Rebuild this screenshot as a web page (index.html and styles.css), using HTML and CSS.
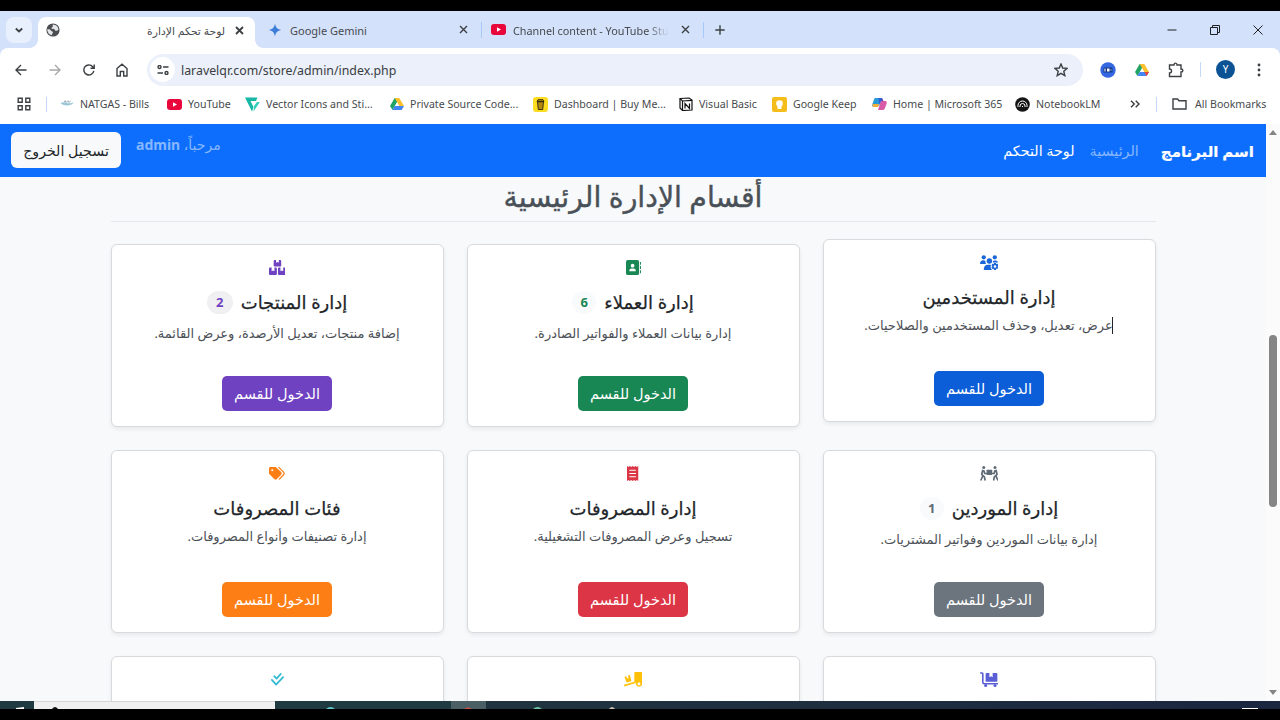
FILE: index.html
```
<!DOCTYPE html>
<html lang="ar" dir="rtl">
<head>
  <meta charset="UTF-8">
  <meta name="viewport" content="width=device-width, initial-scale=1.0">
  <title>لوحة تحكم الإدارة</title>
  <link rel="stylesheet" href="styles.css">
</head>
<body>
  <div class="screen">
    <!-- Browser window -->
    <div class="browser" dir="ltr">
      <div class="tab-strip">
        <div class="tab-search"><svg width="10" height="10" viewBox="0 0 10 10"><path d="M1.8 3.5 5 6.5l3.2-3" class="line bold"/></svg></div>
        <div class="tab active">
          <svg width="14" height="14" viewBox="0 0 14 14"><circle cx="7" cy="7" r="6.6" fill="#4a4d51"/><path d="M1.2 6.3c2-.2 3.2.2 3.7 1.2.5.9 1.8.8 2 1.8.2.9-1 1.3-1.2 3-2.6-.6-4.5-3-4.5-6zM6.8 1.6c-.6 1 .2 1.3 0 2-.2.8-1.6.8-1.2 1.8.5 1 1.8.3 2.7.8.9.5.5 1.5 1.6 1.6 1 .1 1.4-.8 2.5-.8.2-2.7-2-5.3-5.6-5.4z" fill="#e3e5e8"/></svg>
          <span class="tab-title" dir="rtl">لوحة تحكم الإدارة</span>
          <svg width="9" height="9" viewBox="0 0 9 9"><path d="M1 1l7 7M8 1 1 8" class="line bold"/></svg>
        </div>
        <div class="tab gemini">
          <svg width="14" height="14" viewBox="0 0 14 14"><path d="M7 .5c.6 4 2.5 5.900 6.500 6.500-4 .6-5.900 2.500-6.500 6.500C6.400 9.500 4.500 7.600.5 7 4.500 6.400 6.400 4.500 7 .5z" fill="#3b7dd8"/></svg>
          <span class="tab-title">Google Gemini</span>
          <svg width="9" height="9" viewBox="0 0 9 9"><path d="M1 1l7 7M8 1 1 8" class="line"/></svg>
        </div>
        <div class="tab studio">
          <svg width="15" height="11" viewBox="0 0 15 11"><rect width="15" height="11" rx="3" fill="#e8063a"/><path d="M6 3.200v4.600l4-2.300z" fill="#fff"/></svg>
          <span class="tab-title fade">Channel content - YouTube Stu</span>
          <svg width="9" height="9" viewBox="0 0 9 9"><path d="M1 1l7 7M8 1 1 8" class="line"/></svg>
        </div>
        <div class="new-tab"><svg width="10" height="10" viewBox="0 0 10 10"><path d="M5 .3v9.400M.3 5h9.400" class="line"/></svg></div>
        <div class="window-buttons">
          <svg width="10" height="10" viewBox="0 0 10 10"><path d="M.5 5h9" class="line thin"/></svg>
          <svg width="10" height="10" viewBox="0 0 10 10"><path d="M.5 2.500h7v7h-7zM2.500 2.500v-2h7v7h-2" class="line thin"/></svg>
          <svg width="10" height="10" viewBox="0 0 10 10"><path d="M.5.5l9 9M9.500.5l-9 9" class="line thin"/></svg>
        </div>
      </div>

      <div class="toolbar">
        <svg width="12" height="12" viewBox="0 0 12 12"><path d="M11.500 6H1.200M6 1 1 6l5 5" class="line"/></svg>
        <svg class="disabled" width="12" height="12" viewBox="0 0 12 12"><path d="M.5 6h10.300M6 1l5 5-5 5" class="line"/></svg>
        <svg width="12" height="12" viewBox="0 0 12 12"><path d="M10.800 6.800A5 5 0 1 1 9.700 2.700L11 4M11.200.5v3.700H7.500" class="line"/></svg>
        <svg width="12" height="14" viewBox="0 0 12 14"><path d="M1 5.500 6 1.200l5 4.300V13H7.700V8.500H4.300V13H1z" class="line"/></svg>
        <div class="address-bar">
          <span class="site-info"><svg width="12" height="10" viewBox="0 0 12 10"><circle cx="2.500" cy="2" r="1.500" class="line"/><circle cx="9.500" cy="8" r="1.500" class="line"/><path d="M6 2h5.500M.5 8H6" class="line"/></svg></span>
          <span class="url">laravelqr.com/store/admin/index.php</span>
          <svg width="14" height="14" viewBox="0 0 14 14"><path d="M7 1l1.700 4 4.400.4-3.300 2.900 1 4.300L7 10.300l-3.800 2.300 1-4.300L.9 5.400 5.300 5z" class="line"/></svg>
        </div>
        <div class="extensions">
          <svg width="16" height="16" viewBox="0 0 16 16"><circle cx="8" cy="8" r="7.700" fill="#3568e0"/><rect x="3.500" y="5.500" width="9" height="5" rx="1" fill="#123a8c"/><path d="M4.500 6.500h1v3h-1zM7 6.500h2.500v3H7zM10.500 7.500h1v1h-1z" fill="#fff"/></svg>
          <svg width="14" height="12" viewBox="0 0 14 12"><path d="M4.700 0h4.600L7 4 2.500 12 0 8z" fill="#1fa463"/><path d="M4.700 0h4.600L14 8H9.400z" fill="#fbc02d"/><path d="M4.700 8H14l-2.400 4H2.400z" fill="#4285f4"/><path d="M9.400 8H14l-2.400 4z" fill="#ea4335"/></svg>
          <svg width="16" height="16" viewBox="0 0 16 16"><path d="M1.500 3H6c0-2.500 3-2.500 3 0h4v4c2.500 0 2.500 3 0 3v4.500H1.500V11c2.700 0 2.700-4 0-4z" class="line"/></svg>
        </div>
        <span class="separator"></span>
        <span class="avatar">Y</span>
        <svg class="menu" width="4" height="14" viewBox="0 0 4 14"><g fill="#3c4043"><circle cx="2" cy="2" r="1.400"/><circle cx="2" cy="7" r="1.400"/><circle cx="2" cy="12" r="1.400"/></g></svg>
      </div>

      <div class="bookmarks">
        <svg width="14" height="14" viewBox="0 0 14 14"><path d="M1.200 1.200h4v4h-4zM8.800 1.200h4v4h-4zM1.200 8.800h4v4h-4zM8.800 8.800h4v4h-4z" class="line"/></svg>
        <span class="separator"></span>
        <div class="bookmark"><svg width="14" height="14" viewBox="0 0 15 14"><path d="M.5 6c3-1 5-.5 7 0s5 0 7-1c-1 4-11 5-14 1z" fill="#9cc7d9"/><path d="M4 5.500l1.500-2 1 2 2-2 1 2 2-2" fill="none" stroke="#76929e" stroke-width=".8"/></svg><span>NATGAS - Bills</span></div>
        <div class="bookmark"><svg width="15" height="11" viewBox="0 0 15 11"><rect width="15" height="11" rx="3" fill="#e8063a"/><path d="M6 3.200v4.600l4-2.300z" fill="#fff"/></svg><span>YouTube</span></div>
        <div class="bookmark"><svg width="15" height="15" viewBox="0 0 15 15"><path d="M0 .5h12.500L11 4H5.500l3 6L7 14.500z" fill="#16b8a4"/><path d="M12 5h2.800L8.500 14.500 9 9z" fill="#2fcfb9"/></svg><span>Vector Icons and Sti...</span></div>
        <div class="bookmark"><svg width="14" height="12" viewBox="0 0 14 12"><path d="M4.700 0h4.600L7 4 2.500 12 0 8z" fill="#1fa463"/><path d="M4.700 0h4.600L14 8H9.400z" fill="#fbc02d"/><path d="M4.700 8H14l-2.400 4H2.400z" fill="#4285f4"/></svg><span>Private Source Code...</span></div>
        <div class="bookmark"><svg width="15" height="15" viewBox="0 0 15 15"><rect width="15" height="15" rx="3" fill="#fbdc20"/><path d="M4.500 4.800h6L9.700 12.500H5.300zM4 4.500l1-1.800h5l1 1.800z" fill="#b28a10" stroke="#2b260c" stroke-width=".9"/></svg><span>Dashboard | Buy Me...</span></div>
        <div class="bookmark"><svg width="14" height="14" viewBox="0 0 14 14"><path d="M1 1.500 10 1l3 2v10l-9.500.5L1 11z" fill="#fff" stroke="#111" stroke-width="1.200"/><path d="M1 1.500 3.500 4l9.500-.6M3.500 4v9.500M6 11.500v-5l4.500 5v-5" fill="none" stroke="#111" stroke-width="1.200"/></svg><span>Visual Basic</span></div>
        <div class="bookmark"><svg width="15" height="15" viewBox="0 0 15 15"><rect width="15" height="15" rx="2" fill="#f5bd1c"/><circle cx="7.500" cy="6.500" r="3.300" fill="#fff"/><path d="M5.500 9h4v3h-4z" fill="#fff"/></svg><span>Google Keep</span></div>
        <div class="bookmark"><svg width="15" height="14" viewBox="0 0 15 14"><path d="M4 1h5.500L7 8.500 4.500 10H2C0 10 0 8.500.6 6.500L2 2.500C2.500 1.200 3 1 4 1z" fill="#2999d8"/><path d="M.7 7H7l-1 3H2C.5 10 .3 9 .7 7z" fill="#f2ae35"/><path d="M9.500 1C11 1 10.800 4 12 4h1.500c1.300 0 1.500 1.500 1 3L13 11c-.5 1.500-1.500 2-2.500 2H6L8.500 5z" fill="#d85ca5"/><path d="M6.500 1H10l1.200 3H9L7.500 8z" fill="#365bd2"/></svg><span>Home | Microsoft 365</span></div>
        <div class="bookmark"><svg width="15" height="15" viewBox="0 0 15 15"><circle cx="7.500" cy="7.500" r="7.300" fill="#151515"/><path d="M3 10V8.500a4.500 4.500 0 0 1 9 0V10M5 10V9a2.500 2.500 0 0 1 5 0v1M7.500 10V9" fill="none" stroke="#fff"/></svg><span>NotebookLM</span></div>
        <svg class="more" width="10" height="8" viewBox="0 0 10 8"><path d="M1 .7 4.300 4 1 7.300M5.700.7 9 4 5.700 7.300" class="line"/></svg>
        <span class="separator"></span>
        <div class="bookmark all"><svg width="15" height="12" viewBox="0 0 15 12"><path d="M1 1h4.500L7 2.800h7V11H1z" class="line"/></svg><span>All Bookmarks</span></div>
      </div>
    </div>

    <!-- Page content -->
    <div class="viewport" dir="ltr">
      <div class="page" dir="rtl">
        <nav class="navbar">
          <a class="brand">اسم البرنامج</a>
          <a class="nav-link home">الرئيسية</a>
          <a class="nav-link current">لوحة التحكم</a>
          <span class="welcome">مرحباً، <strong>admin</strong></span>
          <a class="logout">تسجيل الخروج</a>
        </nav>

        <main class="container">
          <h2>أقسام الإدارة الرئيسية</h2>
          <div class="cards">
            <div class="card lifted">
              <svg class="icon blue" viewBox="0 0 20 16"><circle cx="4" cy="2.500" r="2.300"/><circle cx="15.800" cy="2.500" r="2.300"/><circle cx="10" cy="6.300" r="2.900"/><path d="M0 9.500C0 7 1.500 5.700 3.300 5.700c1.200 0 2 .3 2.600.9-.3 1.200 0 2.200.6 2.900zM13.900 6.300c1-.7 4.400-1 5.500 1.700h-5.700zM4 16c0-3.600 1.700-5.600 4.300-5.600h3.500c-1 2-.4 4.300 1.400 5.600z"/><path fill-rule="evenodd" d="M15 8.500h2l.4 1.200 1.300-.3 1 1.700-.9 1 .9 1-1 1.700-1.300-.2L17 16h-2l-.5-1.400-1.300.2-1-1.700 1-1-1-1 1-1.700 1.300.3zM16 10.800a1.400 1.400 0 1 0 0 2.800 1.400 1.400 0 0 0 0-2.800z"/></svg>
              <h5><span>إدارة المستخدمين</span></h5>
              <p class="caret">عرض، تعديل، وحذف المستخدمين والصلاحيات.</p>
              <a class="btn blue">الدخول للقسم</a>
            </div>
            <div class="card counted">
              <svg class="icon green" viewBox="0 0 16 16"><path fill-rule="evenodd" d="M2 0h10a2 2 0 0 1 2 2v12a2 2 0 0 1-2 2H2a2 2 0 0 1-2-2V2a2 2 0 0 1 2-2zM7 4a2 2 0 1 0 0 4 2 2 0 0 0 0-4zM5.800 9C4.400 9 3.500 10 3.500 12h7c0-2-.9-3-2.300-3z"/><path d="M15 2h1v3h-1zM15 6.500h1v3h-1zM15 11h1v3h-1z"/></svg>
              <h5><span>إدارة العملاء</span><b class="badge green">6</b></h5>
              <p>إدارة بيانات العملاء والفواتير الصادرة.</p>
              <a class="btn green">الدخول للقسم</a>
            </div>
            <div class="card counted">
              <svg class="icon purple" viewBox="0 0 18 16"><path d="M5.800 0h1.700v3l1.500-.8 1.500.8V0h1.300c.7 0 1.200.5 1.200 1.200v4.600c0 .7-.5 1.200-1.200 1.200H6.200C5.500 7 5 6.500 5 5.800V1C5 .4 5.300 0 5.800 0zM1.200 8h1.600v4l1.500-.8 1.500.8V8h1.400c.7 0 1.200.5 1.200 1.200v5.500c0 .8-.5 1.300-1.200 1.300h-6C.5 16 0 15.500 0 14.700V9.200C0 8.500.5 8 1.200 8zM10.800 8h1.400v4l1.500-.8 1.500.8V8h1.600c.7 0 1.200.5 1.200 1.200v5.500c0 .8-.5 1.300-1.200 1.300h-6c-.7 0-1.200-.5-1.200-1.300V9.200c0-.7.500-1.200 1.200-1.200z"/></svg>
              <h5><span>إدارة المنتجات</span><b class="badge purple">2</b></h5>
              <p>إضافة منتجات، تعديل الأرصدة، وعرض القائمة.</p>
              <a class="btn purple">الدخول للقسم</a>
            </div>

            <div class="card counted">
              <svg class="icon gray" viewBox="0 0 20 16"><circle cx="4" cy="1.600" r="1.600"/><circle cx="16" cy="1.600" r="1.600"/><rect x="7" y="4" width="6" height="5.500" rx=".6"/><path d="M3 4 1.800 9l2.900 2.500L5.500 15.500M3 10.500.8 15.500M4 4.500l1 3.500h3M17 4l1.200 5-2.900 2.500-.8 4M17 10.500l2.200 5M16 4.500 15 8h-3" fill="none" stroke="currentColor" stroke-width="1.800" stroke-linejoin="round"/></svg>
              <h5><span>إدارة الموردين</span><b class="badge gray">1</b></h5>
              <p>إدارة بيانات الموردين وفواتير المشتريات.</p>
              <a class="btn gray">الدخول للقسم</a>
            </div>
            <div class="card">
              <svg class="icon red" viewBox="0 0 12 16"><path fill-rule="evenodd" d="M0 0 1.500 1 3 0l1.500 1L6 0l1.500 1L9 0l1.500 1L12 0v16l-1.500-1L9 16l-1.500-1L6 16l-1.500-1L3 16l-1.500-1L0 16zM2.500 4v1h7V4zM2.500 7.500v1h7v-1zM2.500 11v1h7v-1z"/></svg>
              <h5><span>إدارة المصروفات</span></h5>
              <p>تسجيل وعرض المصروفات التشغيلية.</p>
              <a class="btn red">الدخول للقسم</a>
            </div>
            <div class="card">
              <svg class="icon orange" viewBox="0 0 17 16"><path fill-rule="evenodd" d="M0 2.500C0 1.700.7 1 1.500 1h5.200c.5 0 .9.200 1.200.5l5 5c.8.800.8 2 0 2.800l-4.500 4.600c-.8.800-2 .8-2.800 0L.5 8.700C.2 8.400 0 8 0 7.500zM3.500 3.400a1.100 1.100 0 1 0 0 2.200 1.100 1.100 0 0 0 0-2.200z"/><path d="m10.500 1.500 4.800 4.800c1 1 1 2.300 0 3.300L11 14" fill="none" stroke="currentColor" stroke-width="1.300" stroke-linecap="round"/></svg>
              <h5><span>فئات المصروفات</span></h5>
              <p>إدارة تصنيفات وأنواع المصروفات.</p>
              <a class="btn orange">الدخول للقسم</a>
            </div>

            <div class="card">
              <svg class="icon indigo" viewBox="0 0 20 16"><path d="M.8 1h1.400c.5 0 .8.300.8.800V11c0 1 .5 1.500 1.300 1.500h15" fill="none" stroke="currentColor" stroke-width="1.700" stroke-linecap="round"/><path d="M7 1h3v4.500l1.800-1 1.700 1V1h4c.6 0 1 .4 1 1v7.500c0 .6-.4 1-1 1H7c-.6 0-1-.4-1-1V2c0-.6.400-1 1-1z"/><circle cx="6" cy="14.300" r="1.600"/><circle cx="16" cy="14.300" r="1.600"/></svg>
            </div>
            <div class="card">
              <svg class="icon yellow" viewBox="0 0 20 16"><path fill-rule="evenodd" d="M12 0h6c1 0 1.500.5 1.500 1.500v11A3.500 3.500 0 1 1 12.700 11L11 11.500V1c0-.6.400-1 1-1zM16 11a1.600 1.600 0 1 0 0 3.200 1.600 1.600 0 0 0 0-3.200z"/><path d="m.5 5 2-.5.8 2.700 1.600-1.400-.7-2 2-.5 1.500 5.500c.2.600-.1 1-.6 1.200l-3.600 1c-.6.100-1-.2-1.200-.7zM0 13.700l12-3.500.4 1.600L.4 15.500z"/></svg>
            </div>
            <div class="card">
              <svg class="icon cyan" viewBox="0 0 16 16"><path d="M4.500 4.500 7 7l4.500-5M2 8.500l4.500 5 7.500-8" fill="none" stroke="currentColor" stroke-width="1.900" stroke-linecap="round" stroke-linejoin="round"/></svg>
            </div>
          </div>
        </main>
      </div>
      <div class="scrollbar">
        <svg width="8" height="5" viewBox="0 0 8 5"><path d="M4 0l4 5H0z" fill="#858585"/></svg>
        <span class="thumb"></span>
        <svg width="8" height="5" viewBox="0 0 8 5"><path d="M4 5 0 0h8z" fill="#858585"/></svg>
      </div>
    </div>

    <div class="taskbar" dir="ltr">
      <span class="start"><svg width="8" height="2" viewBox="0 0 8 2"><path d="M0 1l8-1v2H0z" fill="#fff"/></svg></span>
      <span class="search"><svg width="6" height="2" viewBox="0 0 6 2"><path d="M0 2q3-4 6 0z" fill="#111"/></svg></span>
      <span class="pinned"><svg width="9" height="2" viewBox="0 0 9 2"><path d="M0 2q4.500-4 9 0z" fill="#63c7cb"/></svg></span>
      <span class="running"><svg width="8" height="2" viewBox="0 0 8 2"><path d="M0 2q4-3 8 0z" fill="#d2504c"/></svg></span>
      <span class="tray">
        <svg width="9" height="2" viewBox="0 0 9 2"><path d="M0 2q4.500-4 9 0z" fill="#6ec3a2"/></svg>
        <svg width="6" height="2" viewBox="0 0 6 2"><path d="M0 2q3-4 6 0z" fill="#c9c2b0"/></svg>
        <svg class="notice" width="16" height="2" viewBox="0 0 16 2"><path d="M0 1h16v1H0z" fill="#fff"/></svg>
      </span>
    </div>
  </div>
</body>
</html>
```
FILE: styles.css
```
* {
  box-sizing: border-box;
}

body {
  margin: 0;
  background-color: #000;
  font-family: "Noto Sans", "DejaVu Sans", sans-serif;
  color: #212529;
  overflow: hidden;
}

svg {
  display: block;
  flex: none;
}

.screen {
  width: 1280px;
  height: 720px;
  padding: 11px 0;
  display: flex;
  flex-direction: column;
}

.line {
  fill: none;
  stroke: #3c4043;
  stroke-width: 1.4;
}

.line.bold {
  stroke-width: 1.8;
}

.line.thin {
  stroke: #202124;
  stroke-width: 1;
}

/* Tabs */
.browser {
  height: 113px;
  background: linear-gradient(#d3e1fb 50px, #fff 50px);
  color: #474a4e;
}

.tab-strip {
  height: 37px;
  display: flex;
  align-items: center;
  padding-left: 6px;
}

.tab-search {
  width: 26px;
  height: 26px;
  border-radius: 8px;
  background: #e9f0fd;
  display: flex;
  align-items: center;
  justify-content: center;
}

.tab {
  height: 37px;
  display: flex;
  align-items: center;
  font-size: 11px;
}

.tab-title {
  flex: 1;
  padding-top: 1px;
  white-space: nowrap;
}

.tab.active {
  position: relative;
  align-self: flex-end;
  height: 31px;
  width: 217px;
  margin-left: 6px;
  padding: 0 11px 5px 8px;
  background: #fff;
  border-radius: 8px 8px 0 0;
}

/* flared feet of the selected tab */
.tab.active::before,
.tab.active::after {
  content: "";
  position: absolute;
  bottom: 0;
  width: 8px;
  height: 8px;
}

.tab.active::before {
  left: -8px;
  background: radial-gradient(circle at 0 0, transparent 7.5px, #fff 8px);
}

.tab.active::after {
  right: -8px;
  background: radial-gradient(circle at 100% 0, transparent 7.5px, #fff 8px);
}

.tab.active .tab-title {
  padding: 0 10px 0 0;
  font-size: 10.8px;
}

.tab.gemini {
  width: 226px;
  padding: 0 13px 0 13px;
}

.tab.gemini .tab-title {
  padding-left: 8px;
}

.tab.studio {
  width: 223px;
  height: 16px;
  padding: 0 13px 0 9px;
  border-left: 1px solid #a8c7fa;
  border-right: 1px solid #a8c7fa;
}

.tab.studio .tab-title {
  margin: 0 12px 0 7px;
  font-size: 10.8px;
}

.tab-title.fade {
  -webkit-mask-image: linear-gradient(to right, #000 86%, transparent);
  mask-image: linear-gradient(to right, #000 86%, transparent);
}

.new-tab {
  margin-left: 11px;
}

.window-buttons {
  margin-left: auto;
  padding-right: 17px;
  display: flex;
  gap: 33px;
}

/* Toolbar */
.toolbar {
  height: 43px;
  display: flex;
  align-items: center;
  padding: 0 19px 0 15px;
  background: #fff;
  border-radius: 8px 8px 0 0;
}

.toolbar > svg {
  margin-right: 22px;
}

.toolbar > svg:nth-child(4) {
  margin-left: -1px;
}

.toolbar > .disabled {
  opacity: 0.45;
}

.address-bar {
  width: 936px;
  height: 32px;
  margin-left: -3px;
  padding: 0 15px 0 3px;
  border-radius: 16px;
  background: #ebf0fa;
  display: flex;
  align-items: center;
}

.site-info {
  width: 25px;
  height: 25px;
  border-radius: 50%;
  background: #fff;
  display: flex;
  align-items: center;
  justify-content: center;
}

.url {
  flex: 1;
  padding: 1px 0 0 6px;
  font-size: 12.35px;
  color: #3a3d41;
}

.extensions {
  margin-left: 17px;
  display: flex;
  align-items: center;
  gap: 19px;
}

.separator {
  width: 1px;
  height: 15px;
  background: #c5d8f8;
}

.toolbar .separator {
  margin: 0 15px 0 16px;
}

.avatar {
  width: 19px;
  height: 19px;
  border-radius: 50%;
  background: #0b5394;
  color: #fff;
  font-size: 10px;
  line-height: 19px;
  text-align: center;
}

.toolbar > .menu {
  margin: 0 0 0 auto;
}

/* Bookmarks bar */
.bookmarks {
  height: 26px;
  display: grid;
  grid-template-columns: 29px 14px 107px 78px 145px 143px 146px 93px 100px 143px 115px 26px 16px auto;
  align-items: center;
  padding-left: 17px;
  font-size: 10.6px;
}

.bookmark {
  display: flex;
  align-items: center;
  gap: 6px;
  white-space: nowrap;
}

.bookmark.all {
  gap: 8px;
}

/* Page */
.viewport {
  height: 577px;
  display: flex;
  background: #f8f9fb;
}

.page {
  width: 1266px;
  overflow: hidden;
}

.navbar {
  height: 53px;
  padding: 0 12px 0 11px;
  background: #0d6efd;
  color: #fff;
  display: flex;
  align-items: center;
}

.brand {
  font-size: 15px;
  font-weight: bold;
  -webkit-text-stroke: 0.2px;
}

.nav-link {
  font-size: 14.3px;
}

.home {
  margin: 0 22px 0 15px;
  color: #86b7fe;
}

.welcome {
  margin-right: auto;
  margin-left: 15px;
  padding-bottom: 13px;
  font-size: 14px;
  color: #86b7fe;
}

.logout {
  width: 110px;
  height: 36px;
  margin-bottom: 1px;
  border-radius: 6px;
  background: #f8f9fa;
  color: #212529;
  font-size: 14.2px;
  line-height: 37px;
  text-align: center;
}

.container {
  width: 1045px;
  margin: 0 auto;
}

h2 {
  height: 45px;
  margin: 0 0 22px;
  border-bottom: 1px solid #e4e6e9;
  color: #495057;
  font-size: 28.4px;
  font-weight: 500;
  line-height: 38px;
  text-align: center;
  -webkit-text-stroke: 0.4px;
}

.cards {
  display: grid;
  grid-template-columns: repeat(3, 333px);
  grid-auto-rows: 183px;
  gap: 23px;
}

.card {
  display: flex;
  flex-direction: column;
  align-items: center;
  padding: 14px 15px 15px;
  border: 1px solid #d8dadd;
  border-radius: 6px;
  background: #fff;
  box-shadow: 0 2px 4px rgba(0, 0, 0, 0.07);
}

.card.lifted {
  transform: translateY(-5px);
}

.icon {
  height: 15px;
  width: auto;
  margin-top: 1px;
  fill: currentColor;
}

h5 {
  height: 30px;
  margin: 12px 0 0;
  display: flex;
  align-items: center;
  font-size: 18px;
  font-weight: 500;
  white-space: nowrap;
  -webkit-text-stroke: 0.25px;
}

.badge {
  min-width: 24px;
  height: 23px;
  margin-right: 8px;
  border-radius: 12px;
  background: #f9fafb;
  font-size: 13px;
  line-height: 23px;
  text-align: center;
  -webkit-text-stroke: 0;
}

.badge.purple {
  min-width: 26px;
  background: #f0f0f2;
}

.card p {
  margin: 3px 0 0;
  color: #4c5157;
  font-size: 13px;
  line-height: 20px;
  white-space: nowrap;
}

.card.counted p {
  margin-top: 6px;
}

/* text cursor at the start of the line */
.card p.caret {
  margin-right: 1px;
  background: linear-gradient(#212529, #212529) right center / 1px 17px no-repeat;
}

.btn {
  width: 110px;
  height: 35px;
  margin-top: auto;
  border-radius: 5px;
  font-size: 14.5px;
  line-height: 35px;
  text-align: center;
}

.icon.blue { color: #1b66d9; }
.icon.gray, .badge.gray { color: #5f6b76; }
.icon.green, .badge.green { color: #198754; }
.icon.purple, .badge.purple { color: #6f42c1; }
.icon.red { color: #dc3545; }
.icon.orange { color: #fd7e14; }
.icon.indigo { color: #5b5fd6; }
.icon.yellow { color: #ffc107; }
.icon.cyan { color: #35bcd4; }

.btn.blue { background: #0b5ed7; color: #fff; }
.btn.gray { background: #6c757d; color: #fff; }
.btn.green { background: #198754; color: #fff; }
.btn.purple { background: #6f42c1; color: #fff; }
.btn.red { background: #dc3545; color: #fff; }
.btn.orange { background: #fd7e14; color: #fff; }

.scrollbar {
  width: 14px;
  padding: 6px 0;
  background: #fbfbfc;
  display: flex;
  flex-direction: column;
  align-items: center;
}

.thumb {
  width: 8px;
  height: 172px;
  margin: 200px 0 auto;
  border-radius: 4px;
  background: #858585;
}

/* Taskbar */
.taskbar {
  height: 8px;
  display: flex;
  background: #1f3a40;
}

.taskbar span {
  display: flex;
  align-items: flex-end;
}

.start {
  width: 34px;
  padding-left: 16px;
}

.search {
  width: 241px;
  padding-left: 18px;
  background: #f0f0f0;
  border-top: 1px solid #d5d5d5;
}

.pinned {
  width: 176px;
  padding-left: 51px;
}

.running {
  width: 35px;
  padding-left: 13px;
  background: #4b6065;
}

.tray {
  flex: 1;
  gap: 67px;
  padding: 0 22px 0 47px;
  background: linear-gradient(to right, #20343f, #1b2640);
}

.notice {
  margin-left: auto;
}
```
